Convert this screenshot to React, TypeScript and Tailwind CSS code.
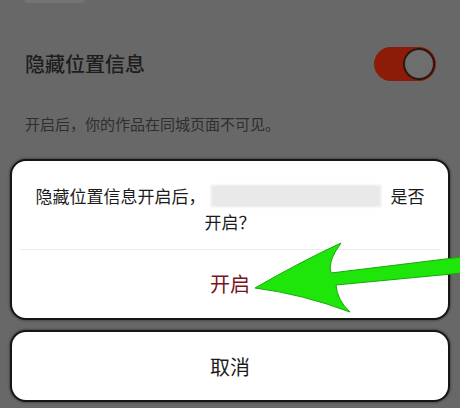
import React from "react";

const font = { fontFamily: '"Noto Sans CJK SC", "Noto Sans", sans-serif' };

function Arrow() {
  return (
    <svg className="pointer-events-none absolute left-0 top-0" width="460" height="408" viewBox="0 0 460 408">
      <path
        d="M255,288 Q300,262 341,243 Q327,262 331,273 L462,257 L462,273 L336,285 Q337,300 350,312 Q302,294 255,288 Z"
        fill="#1fe60a"
        stroke="#17a80a"
        strokeWidth="1"
        strokeLinejoin="round"
      />
    </svg>
  );
}

export default function App() {
  return (
    <div
      className="relative h-[408px] w-[460px] overflow-hidden bg-[#686868]"
      style={font}
    >
      {/* faint remnant at top */}
      <div className="ml-[25px] h-[3px] w-[60px] rounded-b bg-[#747474]" />

      {/* setting row */}
      <div className="mt-[44px] flex h-[34px] items-center justify-between pl-[25px] pr-[24px]">
        <span className="text-[20px] font-medium leading-none text-[#1d1d1d]">隐藏位置信息</span>
        <div className="flex h-[34px] w-[62px] items-center justify-end rounded-full bg-[#8c1b07] pr-[1px]">
          <div className="h-[32px] w-[32px] rounded-full border-2 border-[#2a1612] bg-[#6e6e6e]" />
        </div>
      </div>

      <p className="mt-[33px] pl-[25px] text-[15px] leading-[20px] text-[#2e2e2e]">
        开启后，你的作品在同城页面不可见。
      </p>

      {/* dialog */}
      <div className="mx-[10px] mt-[25px] h-[161px] rounded-[16px] border-2 border-[#151515] bg-white shadow-[0_0_3px_rgba(0,0,0,0.6)]">
        <div className="pt-[22px] text-[17px] leading-[26px] text-[#1c1c1c]">
          <div className="flex items-center justify-center">
            <span>隐藏位置信息开启后，</span>
            <span className="ml-[5px] mr-[10px] inline-block h-[22px] w-[170px] bg-[#e9e9e9] blur-[1px]" />
            <span>是否</span>
          </div>
          <div className="text-center">开启？</div>
        </div>
        <div className="mx-[8px] mt-[14px] h-px bg-[#ececec]" />
        <div className="flex h-[68px] items-center justify-center text-[20px] text-[#7a1222]">开启</div>
      </div>

      {/* cancel */}
      <div className="mx-[10px] mt-[10px] flex h-[72px] items-center justify-center rounded-[16px] border-2 border-[#151515] bg-white pt-[2px] text-[20px] text-[#1c1c1c] shadow-[0_0_3px_rgba(0,0,0,0.6)]">
        取消
      </div>

      <Arrow />
    </div>
  );
}
